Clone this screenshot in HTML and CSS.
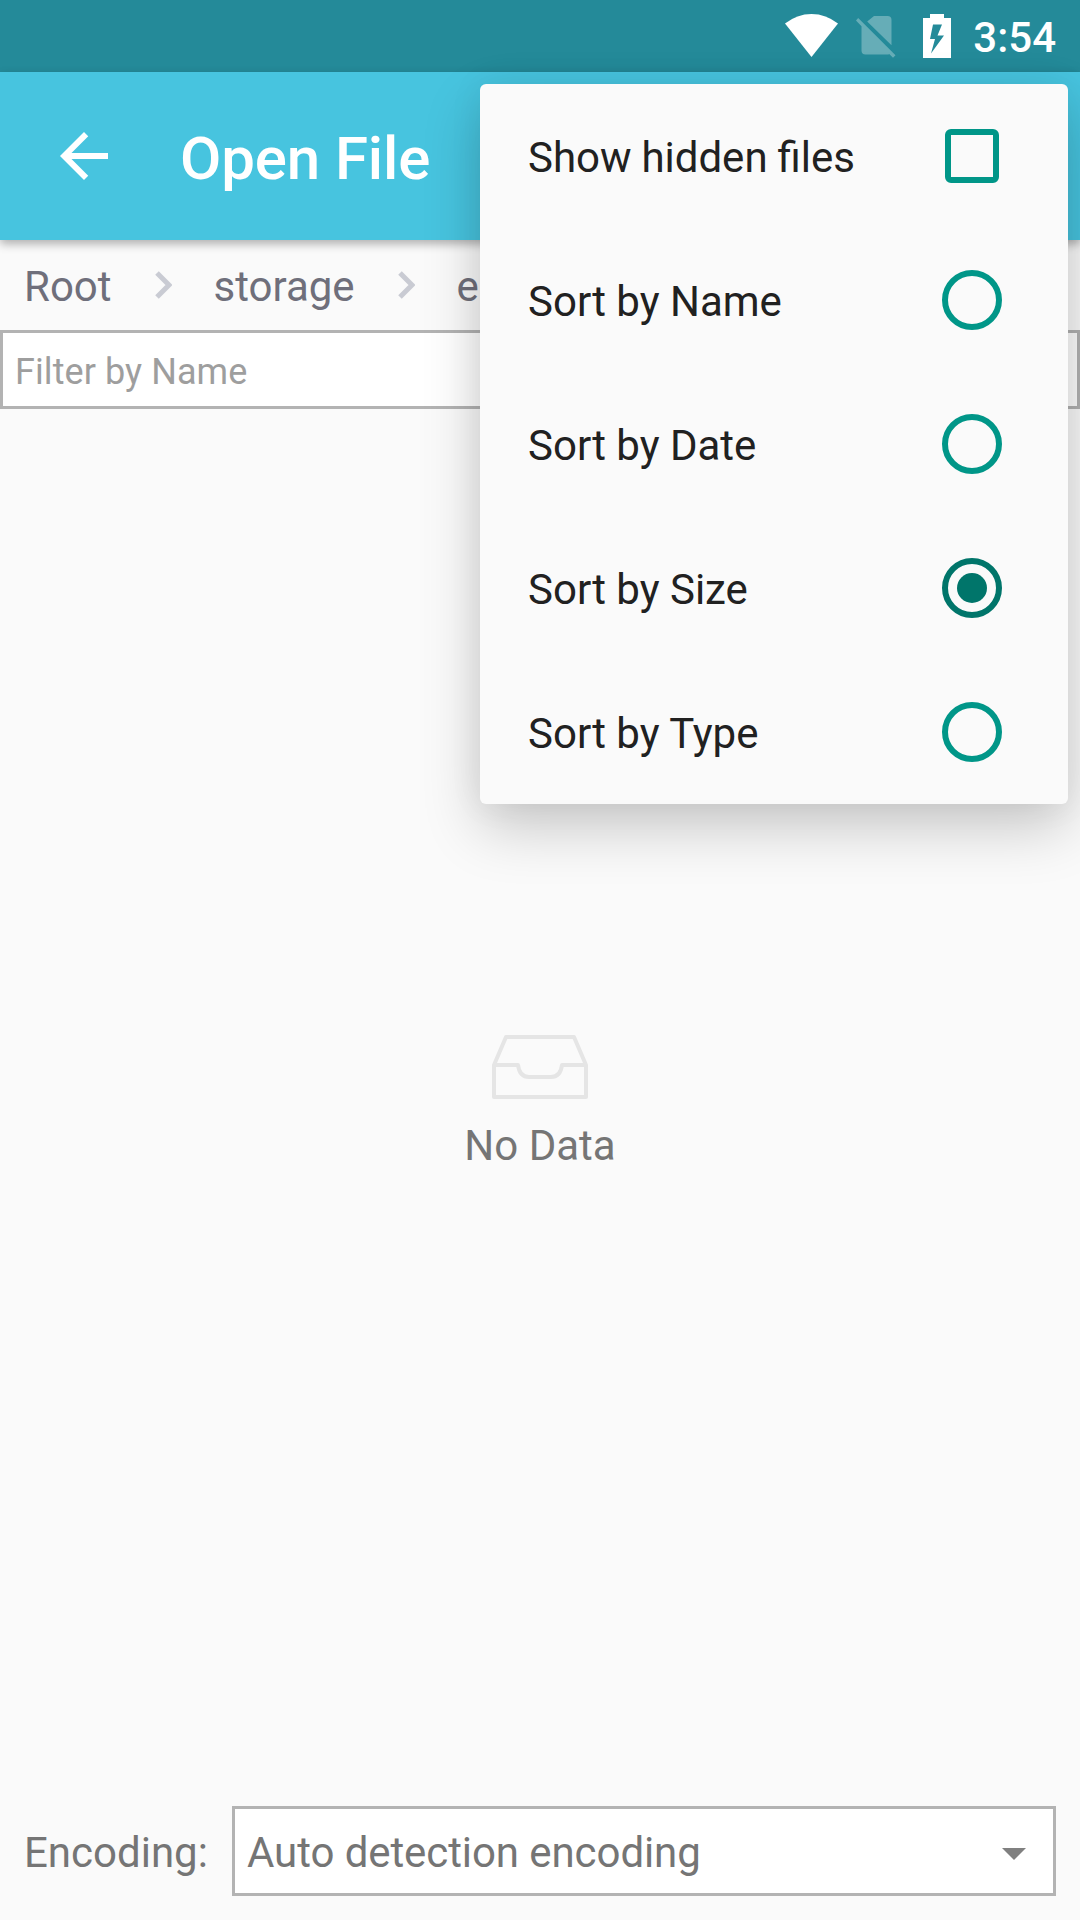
FILE: index.html
```html
<!DOCTYPE html>
<html lang="en">
<head>
<meta charset="utf-8">
<title>Open File</title>
<link rel="stylesheet" href="styles.css">
</head>
<body>
<div class="screen">
  <header class="status-bar">
    <svg class="wifi" viewBox="0 0 54 44" width="54" height="44"><path fill="#fff" d="M0 9.6Q12 0 26.5 0T53 9.6L26.5 43Z"/></svg>
    <svg class="sim" viewBox="0 0 40 44" width="40" height="44"><path fill="#fff" fill-opacity=".3" d="M18 2H31.500Q35.500 2 35.500 6V31.300L11.200 7.600ZM2.200 3.900L39.500 41.200L37 43.800L33.200 40Q32.500 40.500 31.500 40.500H9.500Q5.500 40.500 5.500 36.500V12.300L0 6.500Z"/></svg>
    <svg class="battery" viewBox="0 0 28 44" width="28" height="44"><path fill="#fff" fill-rule="evenodd" d="M7 0H21V4H28V44H0V4H7ZM10 10.500L7 25H12L8 39.500L21 21.500H14.500L19 10.500Z"/></svg>
    <span class="clock">3:54</span>
  </header>
  <div class="app-bar">
    <svg class="back" viewBox="0 0 24 24" width="72" height="72"><path fill="#fff" d="M20 11H7.830l5.590-5.590L12 4l-8 8 8 8 1.410-1.410L7.830 13H20v-2z"/></svg>
    <h1 class="title">Open File</h1>
  </div>
  <nav class="breadcrumb">
    <span>Root</span>
    <svg class="chevron" viewBox="0 0 17 28" width="17" height="28"><path d="M2 2L14 14L2 26"/></svg>
    <span>storage</span>
    <svg class="chevron" viewBox="0 0 17 28" width="17" height="28"><path d="M2 2L14 14L2 26"/></svg>
    <span>e</span>
  </nav>
  <div class="filter">Filter by Name</div>
  <main class="empty">
    <svg viewBox="0 0 96 64" width="96" height="64" fill="none" stroke="#e5e5e5" stroke-width="4" stroke-linejoin="round"><path d="M2 30L14 2H82L94 30V62H2ZM2 30H26C27 38 31 42 37 42H59C65 42 69 38 70 30H94"/></svg>
    <p class="empty-text">No Data</p>
  </main>
  <footer class="encoding">
    <span class="encoding-label">Encoding:</span>
    <div class="select"><span>Auto detection encoding</span><i class="caret"></i></div>
  </footer>
  <div class="menu">
    <div class="item"><span class="wide-label">Show hidden files</span><i class="checkbox"></i></div>
    <div class="item"><span>Sort by Name</span><i class="radio"></i></div>
    <div class="item"><span>Sort by Date</span><i class="radio"></i></div>
    <div class="item"><span>Sort by Size</span><i class="radio selected"></i></div>
    <div class="item"><span>Sort by Type</span><i class="radio"></i></div>
  </div>
</div>
</body>
</html>
```
FILE: styles.css
```css
* { box-sizing: border-box; }
body { margin: 0; background: #fafafa; font-family: Roboto, "Noto Sans", sans-serif; font-size: 42px; }
svg { display: block; flex: none; }
.screen { position: relative; width: 1080px; height: 1920px; overflow: hidden; display: flex; flex-direction: column; }

.status-bar { height: 72px; flex: none; display: flex; justify-content: flex-end; align-items: flex-start; padding: 14px 24px 0 0; background: #248a99; color: #fff; }
.wifi { margin-right: 17px; }
.sim { margin-right: 27px; }
.battery { margin-right: 22px; }
.clock { font-weight: 500; line-height: 49px; margin-top: -1px; }

.app-bar { position: relative; height: 168px; flex: none; display: flex; align-items: flex-start; padding-left: 48px; background: #47c4df; color: #fff; box-shadow: 0 4px 9px rgba(0, 0, 0, .3); }
.back { margin-top: 48px; }
.title { margin: 5px 0 0 60px; font-size: 60px; line-height: 163px; font-weight: 500; letter-spacing: -.12px; }

.breadcrumb { height: 90px; flex: none; display: flex; align-items: flex-start; padding: 4px 0 0 24px; line-height: 86px; color: #6f6f7b; white-space: nowrap; }
.chevron { margin: 27px 42px 0 43px; fill: none; stroke: #c9cbd3; stroke-width: 5; }

.filter { height: 79px; flex: none; border: 3px solid #b3b3b3; background: #fff; padding: 3px 12px 0; font-size: 36px; line-height: 72px; letter-spacing: .08px; color: #9e9e9e; }

.empty { flex: 1; display: flex; flex-direction: column; align-items: center; padding-top: 626px; color: #757575; }
.empty-text { margin: 22px 0 0; line-height: 49px; }

.encoding { height: 114px; flex: none; display: flex; padding: 0 24px 24px; color: #757575; }
.encoding-label { width: 208px; line-height: 93px; }
.select { flex: 1; display: flex; justify-content: space-between; align-items: flex-start; border: 3px solid #b3b3b3; background: #fff; padding: 0 27px 0 12px; line-height: 87px; letter-spacing: -.08px; }
.caret { margin-top: 39px; border: 12px solid transparent; border-top-color: #808080; border-bottom: 0; }

.menu { position: absolute; left: 480px; top: 84px; width: 588px; height: 720px; border-radius: 6px; background: #fafafa; color: #212121; box-shadow: 0 24px 58px rgba(0, 0, 0, .2), 0 0 36px rgba(0, 0, 0, .06); }
.item { height: 144px; display: flex; justify-content: space-between; align-items: center; padding: 0 66px 0 48px; }
.item span { padding-top: 3px; line-height: 141px; }
.item .wide-label { word-spacing: -.6px; }
.checkbox { width: 54px; height: 54px; margin-right: 3px; border: 6px solid #009688; border-radius: 6px; }
.radio { width: 60px; height: 60px; border: 6px solid #009688; border-radius: 50%; }
.selected { display: flex; align-items: center; justify-content: center; border-color: #00756a; }
.selected::after { content: ""; flex: none; width: 30px; height: 30px; border-radius: 50%; background: #00756a; }
```
